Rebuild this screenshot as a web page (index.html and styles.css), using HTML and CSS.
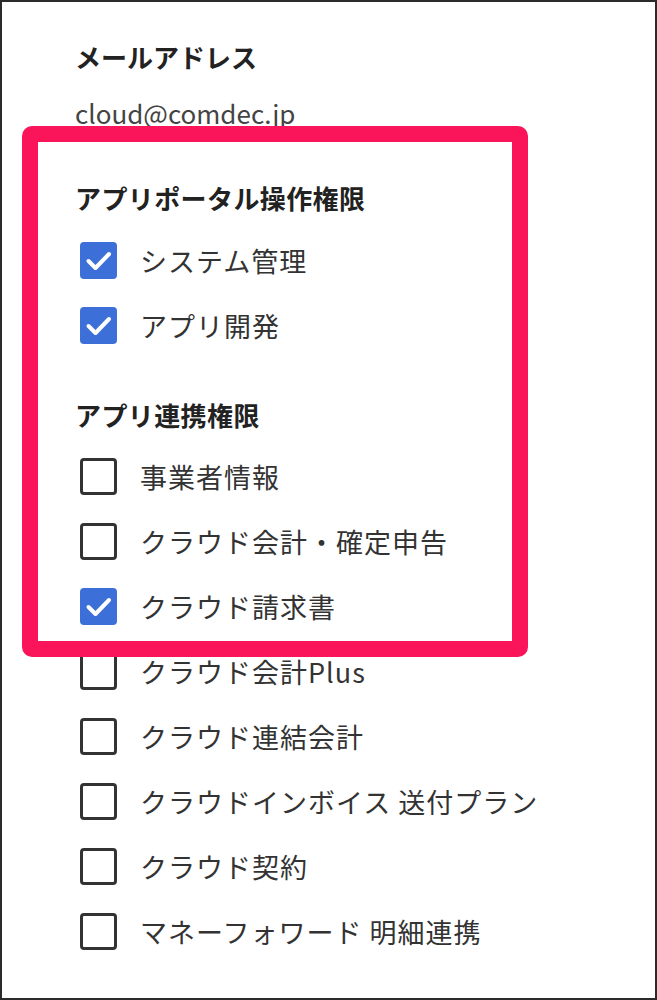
FILE: index.html
```html
<!DOCTYPE html>
<html lang="ja">
<head>
    <meta charset="UTF-8">
    <meta name="viewport" content="width=device-width, initial-scale=1.0">
    <title>ユーザー権限</title>
    <link rel="stylesheet" href="styles.css">
</head>
<body>
    <div class="page">
        <div class="field">
            <div class="field-label">メールアドレス</div>
            <div class="field-value">cloud@comdec.jp</div>
        </div>

        <div class="group group-portal">
            <h2 class="group-title">アプリポータル操作権限</h2>
            <label class="check-row"><span class="box checked"><svg viewBox="0 0 37 37"><polyline points="8.5,19 15.5,26 29,12"/></svg></span><span class="check-text">システム管理</span></label>
            <label class="check-row"><span class="box checked"><svg viewBox="0 0 37 37"><polyline points="8.5,19 15.5,26 29,12"/></svg></span><span class="check-text">アプリ開発</span></label>
        </div>

        <div class="group group-link">
            <h2 class="group-title">アプリ連携権限</h2>
            <label class="check-row"><span class="box"></span><span class="check-text">事業者情報</span></label>
            <label class="check-row"><span class="box"></span><span class="check-text">クラウド会計・確定申告</span></label>
            <label class="check-row"><span class="box checked"><svg viewBox="0 0 37 37"><polyline points="8.5,19 15.5,26 29,12"/></svg></span><span class="check-text">クラウド請求書</span></label>
            <label class="check-row"><span class="box"></span><span class="check-text">クラウド会計Plus</span></label>
            <label class="check-row"><span class="box"></span><span class="check-text">クラウド連結会計</span></label>
            <label class="check-row"><span class="box"></span><span class="check-text">クラウドインボイス 送付プラン</span></label>
            <label class="check-row"><span class="box"></span><span class="check-text">クラウド契約</span></label>
            <label class="check-row"><span class="box"></span><span class="check-text">マネーフォワード 明細連携</span></label>
        </div>

        <!-- annotation frame drawn over the screenshot -->
        <div class="highlight"></div>
    </div>
</body>
</html>
```

FILE: styles.css
```css
body {
    margin: 0;
    padding: 0;
    background-color: #ffffff;
    font-family: "Noto Sans CJK JP", "Noto Sans", sans-serif;
}

.page {
    position: relative;
    box-sizing: border-box;
    height: 1000px;
    border: 2px solid #2b2b2b;
    padding: 35px 0 0 73px;
    color: #333;
}

.field-label {
    font-size: 26px;
    font-weight: bold;
    line-height: 40px;
    color: #222;
}

.field-value {
    margin-top: 16px;
    font-size: 26px;
    line-height: 40px;
    color: #444;
}

.group-title {
    margin: 0 0 10px;
    font-size: 26px;
    font-weight: bold;
    line-height: 40px;
    letter-spacing: 0.4px;
    color: #222;
}

.group-portal {
    margin-top: 45px;
}

.group-link {
    margin-top: 37px;
}

.group-link .group-title {
    margin-bottom: 9px;
}

.check-row {
    display: flex;
    align-items: center;
    height: 65px;
}

.box {
    box-sizing: border-box;
    flex-shrink: 0;
    width: 37px;
    height: 37px;
    margin-left: 5px;
    border: 3px solid #333;
    border-radius: 4px;
}

.box.checked {
    border: none;
    background-color: #3d6fd9;
}

.box svg {
    display: block;
    width: 37px;
    height: 37px;
}

.box svg polyline {
    fill: none;
    stroke: #fff;
    stroke-width: 4;
    stroke-linecap: round;
    stroke-linejoin: round;
}

.check-text {
    margin-left: 23px;
    font-size: 27px;
    letter-spacing: 1px;
    color: #333;
}

.highlight {
    position: absolute;
    left: 20px;
    top: 124px;
    width: 506px;
    height: 531px;
    box-sizing: border-box;
    border: 16px solid #fa1459;
    border-radius: 10px;
}
```
